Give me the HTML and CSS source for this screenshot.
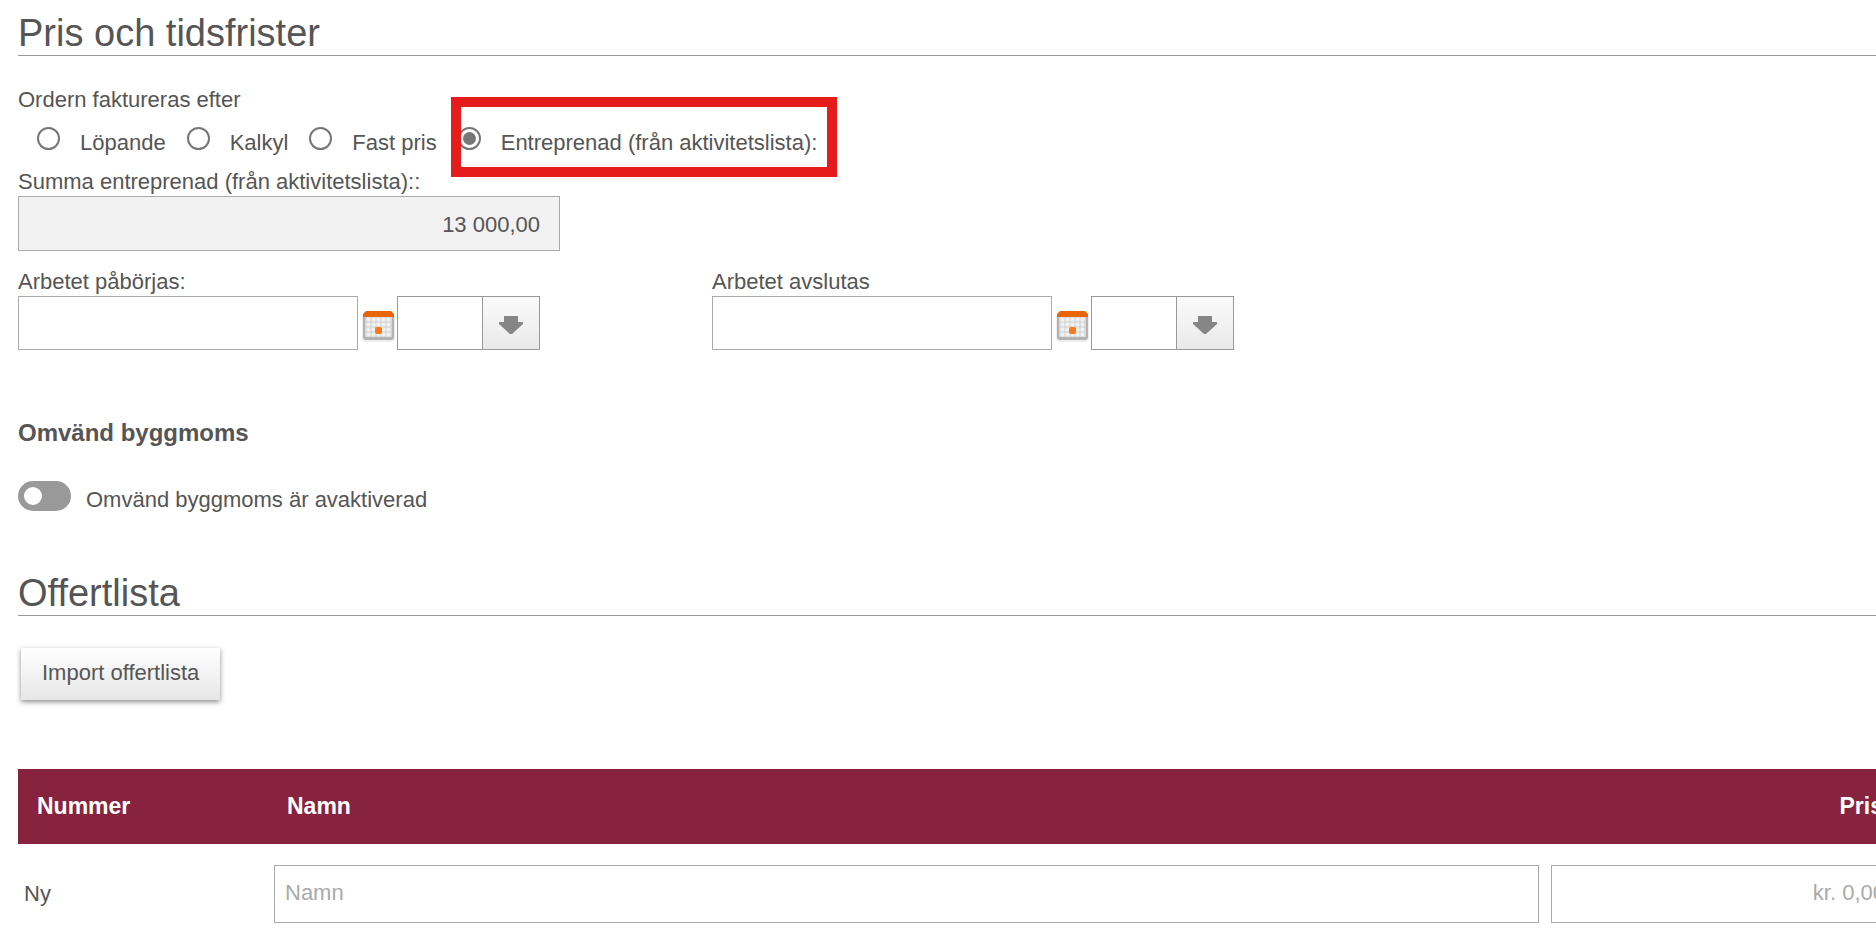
FILE: index.html
```html
<!DOCTYPE html>
<html lang="sv">
<head>
  <meta charset="UTF-8" />
  <meta name="viewport" content="width=device-width, initial-scale=1.0"/>
  <title>Pris och tidsfrister</title>
  <link rel="stylesheet" href="styles.css">
</head>
<body>
  <form class="page">
    <h2 class="title">Pris och tidsfrister</h2>

    <div class="billing" role="radiogroup" aria-labelledby="billingLabel">
      <div class="label" id="billingLabel">Ordern faktureras efter</div>
      <div class="radios">
        <label class="radio"><input type="radio" name="billing"><span>Löpande</span></label>
        <label class="radio"><input type="radio" name="billing"><span>Kalkyl</span></label>
        <label class="radio"><input type="radio" name="billing"><span>Fast pris</span></label>
        <label class="radio marked"><input type="radio" name="billing" checked><span>Entreprenad (från aktivitetslista):</span></label>
      </div>
    </div>

    <label class="label" for="sum">Summa entreprenad (från aktivitetslista)::</label>
    <input class="field sum" type="text" id="sum" value="13 000,00" readonly>

    <div class="dates">
      <div class="date">
        <label class="label" for="startDate">Arbetet påbörjas:</label>
        <div class="date-row">
          <input class="field day" type="text" id="startDate">
          <button class="cal-btn" type="button" aria-label="Välj datum">
            <svg width="33" height="32" viewBox="0 0 33 32">
              <rect x="0" y="4" width="33" height="28" rx="4" fill="#eee"/>
              <rect x="1" y="4" width="31" height="26" rx="3" fill="#b3b3b3"/>
              <path d="M3 7h27v20H3z" fill="#d6d6d6"/>
              <path d="M5 8h3v3H5zM10 8h3v3h-3zM15 8h3v3h-3zM20 8h3v3h-3zM25 8h3v3h-3zM5 13h3v3H5zM10 13h3v3h-3zM15 13h3v3h-3zM20 13h3v3h-3zM25 13h3v3h-3zM5 18h3v3H5zM10 18h3v3h-3zM20 18h3v3h-3zM25 18h3v3h-3zM5 23h3v3H5zM10 23h3v3h-3zM15 23h3v3h-3zM20 23h3v3h-3zM25 23h3v3h-3z" fill="#f6f6f6" stroke="#ececec"/>
              <path d="M4 1h25l3 3v3H1V4z" fill="#e8650a"/>
              <rect x="13" y="17" width="7" height="7" rx="2" fill="#f97a1c"/>
            </svg>
          </button>
          <div class="time">
            <select aria-label="Starttid"><option></option></select>
            <span class="arrow"><svg width="24" height="18" viewBox="0 0 24 18"><path d="M5 0h14v6h5v2L13 18h-2L0 8V6h5z" fill="#868686"/></svg></span>
          </div>
        </div>
      </div>
      <div class="date">
        <label class="label" for="endDate">Arbetet avslutas</label>
        <div class="date-row">
          <input class="field day" type="text" id="endDate">
          <button class="cal-btn" type="button" aria-label="Välj datum">
            <svg width="33" height="32" viewBox="0 0 33 32">
              <rect x="0" y="4" width="33" height="28" rx="4" fill="#eee"/>
              <rect x="1" y="4" width="31" height="26" rx="3" fill="#b3b3b3"/>
              <path d="M3 7h27v20H3z" fill="#d6d6d6"/>
              <path d="M5 8h3v3H5zM10 8h3v3h-3zM15 8h3v3h-3zM20 8h3v3h-3zM25 8h3v3h-3zM5 13h3v3H5zM10 13h3v3h-3zM15 13h3v3h-3zM20 13h3v3h-3zM25 13h3v3h-3zM5 18h3v3H5zM10 18h3v3h-3zM20 18h3v3h-3zM25 18h3v3h-3zM5 23h3v3H5zM10 23h3v3h-3zM15 23h3v3h-3zM20 23h3v3h-3zM25 23h3v3h-3z" fill="#f6f6f6" stroke="#ececec"/>
              <path d="M4 1h25l3 3v3H1V4z" fill="#e8650a"/>
              <rect x="13" y="17" width="7" height="7" rx="2" fill="#f97a1c"/>
            </svg>
          </button>
          <div class="time">
            <select aria-label="Sluttid"><option></option></select>
            <span class="arrow"><svg width="24" height="18" viewBox="0 0 24 18"><path d="M5 0h14v6h5v2L13 18h-2L0 8V6h5z" fill="#868686"/></svg></span>
          </div>
        </div>
      </div>
    </div>

    <h3 class="subtitle">Omvänd byggmoms</h3>
    <label class="toggle">
      <input type="checkbox" role="switch">
      <span>Omvänd byggmoms är avaktiverad</span>
    </label>

    <h2 class="title">Offertlista</h2>
    <button class="import-btn" type="button">Import offertlista</button>

    <table class="offers">
      <thead>
        <tr>
          <th class="col-number">Nummer</th>
          <th>Namn</th>
          <th class="col-price">Pris</th>
        </tr>
      </thead>
      <tbody>
        <tr>
          <td>Ny</td>
          <td><input class="field" type="text" placeholder="Namn" aria-label="Namn"></td>
          <td><input class="field price" type="text" placeholder="kr. 0,00" aria-label="Pris"></td>
        </tr>
      </tbody>
    </table>
  </form>
</body>
</html>
```

FILE: styles.css
```css
* {
  box-sizing: border-box;
}

body {
  margin: 0;
  background: #fff;
  color: #555;
  font-family: "Liberation Sans", Arial, sans-serif;
  font-size: 22px;
  line-height: 28px;
  overflow-x: hidden;
}

input, select, button {
  margin: 0;
  font: inherit;
  color: inherit;
}

/* the form runs on past the right edge of the window */
.page {
  margin-right: -26px;
  padding: 10px 0 18px 18px;
}

.title {
  margin: 0;
  padding-top: 1px;
  border-bottom: 1px solid #999;
  font-size: 38px;
  font-weight: normal;
  line-height: 44px;
}

.billing {
  margin-top: 30px;
}

.label {
  display: block;
}

.radios {
  display: flex;
  gap: 21px;
  padding: 13px 0 11px 19px;
}

.radio {
  display: flex;
  gap: 20px;
  position: relative;
}

.radio span {
  padding-top: 2px;
}

.radio input {
  appearance: none;
  display: grid;
  place-items: center;
  width: 23px;
  height: 23px;
  border: 2px solid #767676;
  border-radius: 50%;
  background: #fff;
}

.radio input:checked::before {
  content: "";
  width: 13px;
  height: 13px;
  border-radius: 50%;
  background: #767676;
}

.marked::after {
  content: "";
  position: absolute;
  inset: -30px -20px -20px -7px;
  border: 10px solid #e61c1c;
  pointer-events: none;
}

.field {
  display: block;
  width: 100%;
  height: 58px;
  padding: 0 10px 2px;
  border: 1px solid #aaa;
  border-radius: 0;
  background: #fff;
}

.field::placeholder {
  color: #aaa;
  opacity: 1;
}

.sum {
  width: 542px;
  height: 55px;
  padding: 2px 19px 0;
  background: #f2f2f2;
  text-align: right;
}

.dates {
  display: flex;
  gap: 172px;
  margin-top: 17px;
}

.date-row {
  display: flex;
  align-items: center;
}

.day {
  width: 340px;
  height: 54px;
}

.cal-btn {
  display: flex;
  padding: 5px 2px 0 4px;
  border: 0;
  background: none;
  cursor: pointer;
}

.time {
  position: relative;
}

.time select {
  appearance: none;
  display: block;
  width: 143px;
  height: 54px;
  padding: 0 64px 0 8px;
  border: 1px solid #999;
  border-radius: 0;
  background: #fff;
}

.arrow {
  position: absolute;
  top: 1px;
  right: 1px;
  bottom: 1px;
  width: 57px;
  display: flex;
  align-items: center;
  justify-content: center;
  padding-top: 4px;
  border-left: 1px solid #999;
  background: linear-gradient(#fbfbfb, #e9e9e9);
  pointer-events: none;
}

.subtitle {
  margin: 69px 0 0;
  font-size: 24px;
}

.toggle {
  display: flex;
  gap: 15px;
  margin: 34px 0 56px;
}

.toggle span {
  padding-top: 5px;
}

.toggle input {
  appearance: none;
  width: 53px;
  height: 30px;
  padding: 6px;
  border-radius: 15px;
  background: #999;
}

.toggle input::before {
  content: "";
  display: block;
  width: 18px;
  height: 18px;
  border-radius: 50%;
  background: #fff;
}

.toggle input:checked::before {
  margin-left: auto;
}

.import-btn {
  display: block;
  margin: 32px 3px 69px;
  padding: 11px 21px 13px;
  border: 0;
  background: linear-gradient(#fff, #e6e6e6);
  box-shadow: 0 2px 5px rgba(0,0,0,0.45);
  cursor: pointer;
}

.offers {
  width: 100%;
  border-collapse: collapse;
  table-layout: fixed;
}

.offers th {
  height: 75px;
  padding: 0 19px 2px;
  background: #87233f;
  color: #fff;
  font-size: 23px;
  text-align: left;
}

.offers td {
  padding: 21px 6px 0;
}

.offers .col-number {
  width: 250px;
}

.offers .col-price {
  width: 357px;
  text-align: right;
}

.price {
  text-align: right;
}
```
